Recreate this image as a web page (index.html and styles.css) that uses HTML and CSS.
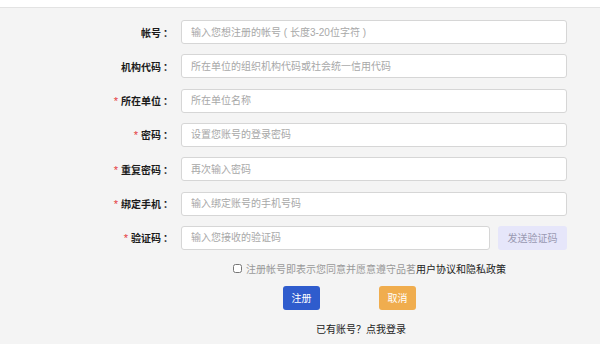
FILE: index.html
```html
<!DOCTYPE html>
<html lang="zh-CN">

<head>
    <meta charset="UTF-8">
    <meta name="viewport" content="width=device-width, initial-scale=1.0">
    <title>注册</title>
    <link rel="stylesheet" href="styles.css">
</head>

<body>
    <div class="top-bar"></div>
    <div class="container">
        <form class="reg-form">
            <label class="form-label">帐号<span class="colon">：</span></label>
            <input class="form-input" type="text" placeholder="输入您想注册的帐号 ( 长度3-20位字符 )">

            <label class="form-label">机构代码<span class="colon">：</span></label>
            <input class="form-input" type="text" placeholder="所在单位的组织机构代码或社会统一信用代码">

            <label class="form-label"><span class="req">*</span>所在单位<span class="colon">：</span></label>
            <input class="form-input" type="text" placeholder="所在单位名称">

            <label class="form-label"><span class="req">*</span>密码<span class="colon">：</span></label>
            <input class="form-input" type="password" placeholder="设置您账号的登录密码">

            <label class="form-label"><span class="req">*</span>重复密码<span class="colon">：</span></label>
            <input class="form-input" type="password" placeholder="再次输入密码">

            <label class="form-label"><span class="req">*</span>绑定手机<span class="colon">：</span></label>
            <input class="form-input" type="text" placeholder="输入绑定账号的手机号码">

            <label class="form-label"><span class="req">*</span>验证码<span class="colon">：</span></label>
            <div class="code-row">
                <input class="form-input" type="text" placeholder="输入您接收的验证码">
                <button class="send-code" type="button">发送验证码</button>
            </div>
        </form>

        <div class="agree-row">
            <input class="agree-check" type="checkbox">
            <span>注册帐号即表示您同意并愿意遵守品茗<b>用户协议和隐私政策</b></span>
        </div>

        <div class="btn-row">
            <button class="btn btn-primary" type="button">注册</button>
            <button class="btn btn-warning" type="button">取消</button>
        </div>

        <div class="login-link">已有账号？点我登录</div>
    </div>
</body>

</html>
```

FILE: styles.css
```css
* {
    margin: 0;
    padding: 0;
    box-sizing: border-box;
    font-family: "Liberation Sans", "Noto Sans CJK SC", sans-serif;
}

body {
    background-color: #f4f4f4;
    min-height: 100vh;
}

.top-bar {
    height: 8px;
    background-color: #fff;
    border-bottom: 1px solid #e3e3e3;
}

.container {
    padding-top: 12px;
}

.reg-form {
    display: grid;
    grid-template-columns: 173px 386px;
    column-gap: 8px;
    row-gap: 10.33px;
    align-items: center;
}

.form-label {
    text-align: right;
    font-size: 10px;
    font-weight: bold;
    color: #1a1a1a;
}

.colon {
    margin-left: 2px;
}

.req {
    color: #e4393c;
    margin-right: 3px;
    font-size: 11px;
    font-weight: normal;
}

.form-input {
    height: 24px;
    width: 100%;
    border: 1px solid #d6d6d6;
    border-radius: 3px;
    background-color: #fff;
    padding: 0 9px;
    font-size: 10px;
    color: #333;
    outline: none;
}

.form-input::placeholder {
    color: #a8a8a8;
}

.code-row {
    display: flex;
    gap: 8px;
}

.code-row .form-input {
    width: 309px;
}

.send-code {
    flex: 1;
    height: 24px;
    border: none;
    border-radius: 3px;
    background-color: #e6e6fa;
    color: #9a9ab2;
    font-size: 10px;
}

.agree-row {
    display: flex;
    align-items: center;
    gap: 4px;
    margin: 11px 0 0 233px;
    font-size: 10px;
    color: #999;
}

.agree-check {
    width: 9px;
    height: 9px;
}

.agree-row b {
    color: #222;
    font-weight: normal;
}

.btn-row {
    display: flex;
    gap: 59px;
    margin: 10px 0 0 283px;
}

.btn {
    width: 37px;
    height: 24px;
    border: none;
    border-radius: 3px;
    color: #fff;
    font-size: 10px;
}

.btn-primary {
    background-color: #2f5ccd;
}

.btn-warning {
    background-color: #f0ad4e;
}

.login-link {
    margin: 11px 0 0 316px;
    font-size: 10px;
    color: #222;
}
```
